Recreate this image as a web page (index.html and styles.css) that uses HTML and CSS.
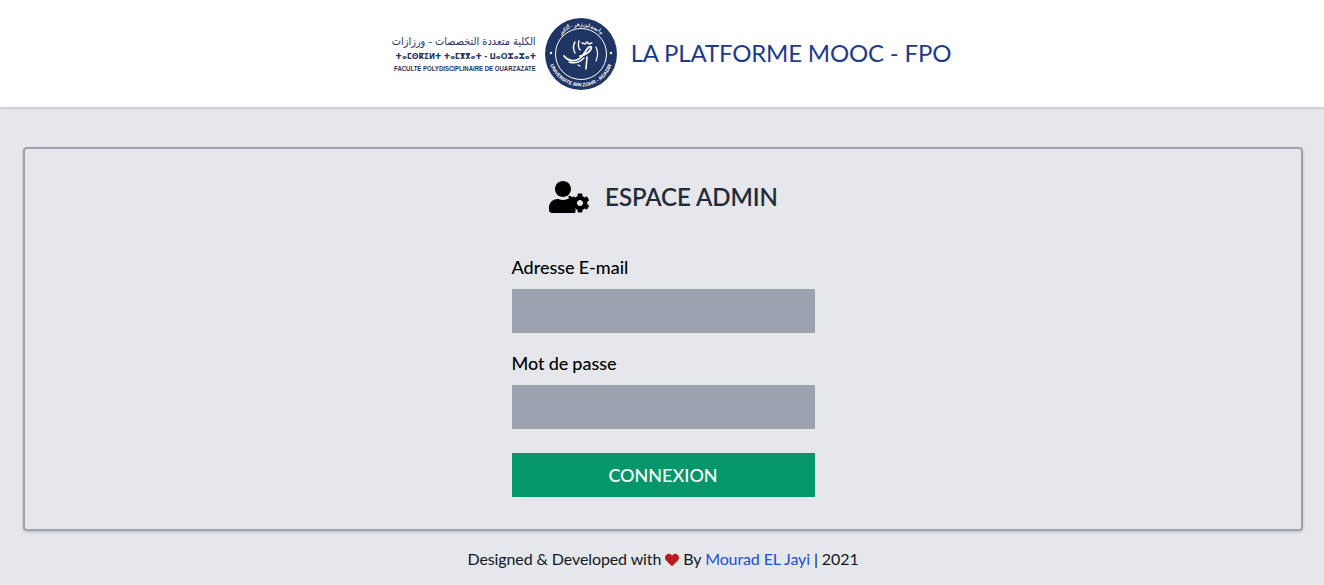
FILE: index.html
```html
<!DOCTYPE html>
<html lang="en">
<head>
  <meta charset="UTF-8">
  <meta name="viewport" content="width=device-width, initial-scale=1.0">
  <title>La Platforme MOOC - FPO</title>
  <link rel="stylesheet" href="styles.css">
</head>
<body>
  <header class="site-header">
    <div class="logo">
      <div class="logo-text">
        <span class="logo-ar" lang="ar" dir="rtl">الكلية متعددة التخصصات - ورزازات</span>
        <span class="logo-tz">ⵜⴰⵎⵙⴽⵉⵍⵜ ⵜⴰⵎⴳⴳⴰⵜ - ⵡⴰⵔⵣⴰⵣⴰⵜ</span>
        <span class="logo-fr">FACULTÉ POLYDISCIPLINAIRE DE OUARZAZATE</span>
      </div>
      <svg class="seal" viewBox="0 0 72 72" aria-hidden="true">
        <defs>
          <path id="seal-arc-bottom" d="M3.5 36a32.5 32.5 0 0 0 65 0"/>
          <path id="seal-arc-top" d="M8 36a28 28 0 0 1 56 0"/>
        </defs>
        <circle cx="36" cy="36" r="36" fill="#1f3563"/>
        <circle cx="36" cy="36" r="25.5" fill="none" stroke="#fff" stroke-width="1"/>
        <circle cx="6" cy="35" r="1.2" fill="#fff"/>
        <circle cx="66" cy="35" r="1.2" fill="#fff"/>
        <text class="seal-text" lang="ar"><textPath href="#seal-arc-top" startOffset="50%" text-anchor="middle">جامعة ابن زهر - أكادير</textPath></text>
        <text class="seal-text"><textPath href="#seal-arc-bottom" startOffset="50%" text-anchor="middle">UNIVERSITE IBN ZOHR - AGADIR</textPath></text>
        <g fill="none" stroke="#fff" stroke-linecap="round">
          <path stroke-width="1.8" d="M19 38c4 5 10 6 15 3 5-3 6-9 10-12 2-1 3 0 2 2-2 4-7 6-11 7"/>
          <path stroke-width="1.4" d="M24 44c6 2 11 0 15-4"/>
          <path stroke-width="1.4" d="M30 24c-2 3-2 7 0 11M34 23c-1 3-1 6 1 9"/>
          <path stroke-width="1.6" d="M42 39l-1 12"/>
          <path stroke-width="1.2" d="M51 29c2 4 2 9 0 14"/>
          <path stroke-width="1.4" d="M37 25l3 1 2-2 2 2 3-1"/>
          <path stroke-width="1.2" d="M33 47l2 1"/>
        </g>
      </svg>
    </div>
    <h1 class="site-title">LA PLATFORME MOOC - FPO</h1>
  </header>

  <main class="card">
    <h2 class="card-title">
      <svg class="admin-icon" viewBox="0 0 640 512" aria-hidden="true">
        <path d="M224 256c70.7 0 128-57.3 128-128S294.7 0 224 0 96 57.3 96 128s57.3 128 128 128zm89.6 32h-16.7c-22.2 10.2-46.9 16-72.9 16s-50.6-5.8-72.9-16h-16.7C60.2 288 0 348.2 0 422.4V464c0 26.5 21.5 48 48 48h352c8.7 0 16.7-2.4 23.7-6.4-4.4-15.1-2.7-31.5 5.5-46.1-27.4-21.3-29-44.3-29-59.5 0-15.2 1.6-38.2 29-59.500-7.2-12.700-9.400-26.800-7.400-40.300-27.200-20.300-58.300-64.200-108.700-64.200z"/>
        <path d="M610.5 373.3c2.6-14.1 2.6-28.5 0-42.6l25.8-14.9c3-1.7 4.3-5.2 3.3-8.5-6.7-21.6-18.2-41.2-33.2-57.4-2.3-2.5-6-3.1-9-1.4l-25.8 14.9c-10.9-9.3-23.4-16.5-36.9-21.3v-29.8c0-3.4-2.4-6.4-5.7-7.1-22.3-5-45-4.8-66.2 0-3.3.7-5.7 3.7-5.7 7.1v29.8c-13.5 4.8-26 12-36.9 21.3l-25.8-14.9c-2.9-1.7-6.7-1.1-9 1.4-15 16.2-26.5 35.8-33.2 57.4-1 3.3.4 6.8 3.3 8.5l25.8 14.9c-2.6 14.1-2.6 28.5 0 42.6l-25.8 14.9c-3 1.7-4.3 5.2-3.3 8.5 6.7 21.6 18.2 41.1 33.2 57.4 2.3 2.5 6 3.1 9 1.4l25.8-14.9c10.9 9.3 23.4 16.5 36.9 21.3v29.8c0 3.4 2.4 6.4 5.7 7.1 22.3 5 45 4.8 66.2 0 3.3-.7 5.7-3.7 5.7-7.1v-29.8c13.5-4.8 26-12 36.9-21.3l25.8 14.9c2.9 1.7 6.7 1.1 9-1.4 15-16.2 26.5-35.8 33.2-57.4 1-3.3-.4-6.8-3.3-8.5l-25.8-14.9zM496 400.5c-26.8 0-48.5-21.8-48.5-48.5s21.8-48.5 48.5-48.5 48.5 21.8 48.5 48.5-21.7 48.5-48.5 48.5z"/>
      </svg>
      <span>ESPACE ADMIN</span>
    </h2>

    <form class="login-form">
      <label class="field">
        <span class="field-label">Adresse E-mail</span>
        <input class="field-input" type="email">
      </label>
      <label class="field">
        <span class="field-label">Mot de passe</span>
        <input class="field-input" type="password">
      </label>
      <button class="submit-btn" type="submit">CONNEXION</button>
    </form>
  </main>

  <footer class="site-footer">
    Designed &amp; Developed with
    <svg class="heart" viewBox="0 0 512 512" aria-hidden="true">
      <path d="M462.3 62.6C407.5 15.9 326 24.3 275.7 76.2L256 96.5l-19.7-20.3C186.1 24.3 104.5 15.9 49.7 62.6c-62.8 53.6-66.1 149.8-9.9 207.9l193.5 199.8c12.5 12.9 32.8 12.9 45.3 0l193.5-199.8c56.3-58.1 53-154.3-9.8-207.9z"/>
    </svg>
    By <a class="footer-link" href="#">Mourad EL Jayi</a> | 2021
  </footer>
</body>
</html>
```

FILE: styles.css
```css
* {
  box-sizing: border-box;
}

body {
  margin: 0;
  background-color: #e5e7eb;
  font-family: Lato, "Noto Sans", sans-serif;
  color: #000;
}

.site-header {
  height: 107px;
  display: flex;
  align-items: center;
  justify-content: center;
  gap: 14px;
  background: #fff;
  box-shadow: 0 1px 3px rgba(0, 0, 0, 0.2);
}

.logo {
  display: flex;
  align-items: center;
  gap: 9px;
  padding-left: 20px;
}

.logo-text {
  width: 143px;
  display: flex;
  flex-direction: column;
  align-items: flex-end;
  gap: 3px;
  color: #1f3563;
  white-space: nowrap;
}

.logo-ar {
  font-family: "DejaVu Sans", sans-serif;
  font-size: 11px;
  line-height: 14px;
  transform: scaleX(0.89);
  transform-origin: right center;
}

.logo-tz {
  font-family: "DejaVu Sans", sans-serif;
  font-size: 8px;
  font-weight: 700;
  line-height: 10px;
  transform: scaleX(0.9);
  transform-origin: right center;
}

.logo-fr {
  font-family: "Liberation Sans", sans-serif;
  font-size: 7px;
  font-weight: 700;
  line-height: 8px;
  transform: scaleX(0.86);
  transform-origin: right center;
}

.seal {
  width: 72px;
  height: 72px;
  flex: none;
}

.seal-text {
  font-family: "Liberation Sans", sans-serif;
  font-size: 5px;
  font-weight: 700;
  fill: #fff;
}

.site-title {
  margin: 0;
  padding-bottom: 2px;
  font-size: 24px;
  font-weight: 400;
  line-height: 32px;
  letter-spacing: -0.17px;
  color: #1e3a8a;
}

.card {
  margin: 40px 21px 0 23px;
  height: 384px;
  padding: 28px 0 32px;
  border: 2px solid #9ca3af;
  border-radius: 4px;
  box-shadow: 0 1px 3px rgba(0, 0, 0, 0.2);
}

.card-title {
  margin: 0 0 36px;
  display: flex;
  align-items: center;
  justify-content: center;
  gap: 16px;
  padding-left: 1px;
  font-size: 24px;
  font-weight: 500;
  line-height: 40px;
  letter-spacing: -0.05px;
  color: #1f2937;
  -webkit-text-stroke: 0.2px #1f2937;
}

.admin-icon {
  width: 40px;
  height: 32px;
}

.login-form {
  width: 303px;
  margin: 0 auto;
}

.field {
  display: block;
  margin-bottom: 16px;
}

.field-label {
  display: block;
  margin-bottom: 8px;
  font-size: 18px;
  font-weight: 500;
  line-height: 28px;
  word-spacing: -0.5px;
}

.field-input {
  display: block;
  width: 100%;
  height: 44px;
  border: 0;
  border-radius: 0;
  background-color: #9ca3af;
}

.submit-btn {
  display: block;
  width: 100%;
  height: 44px;
  margin-top: 24px;
  border: 0;
  background-color: #059669;
  color: #fff;
  font-family: inherit;
  font-size: 18px;
  font-weight: 500;
  cursor: pointer;
}

.site-footer {
  margin-top: 16px;
  padding-left: 2px;
  text-align: center;
  font-size: 16px;
  line-height: 24px;
  letter-spacing: -0.1px;
  color: #111827;
}

.heart {
  width: 14px;
  height: 14px;
  fill: #b91c1c;
  vertical-align: -2px;
}

.footer-link {
  color: #1d4ed8;
  text-decoration: none;
}
```
